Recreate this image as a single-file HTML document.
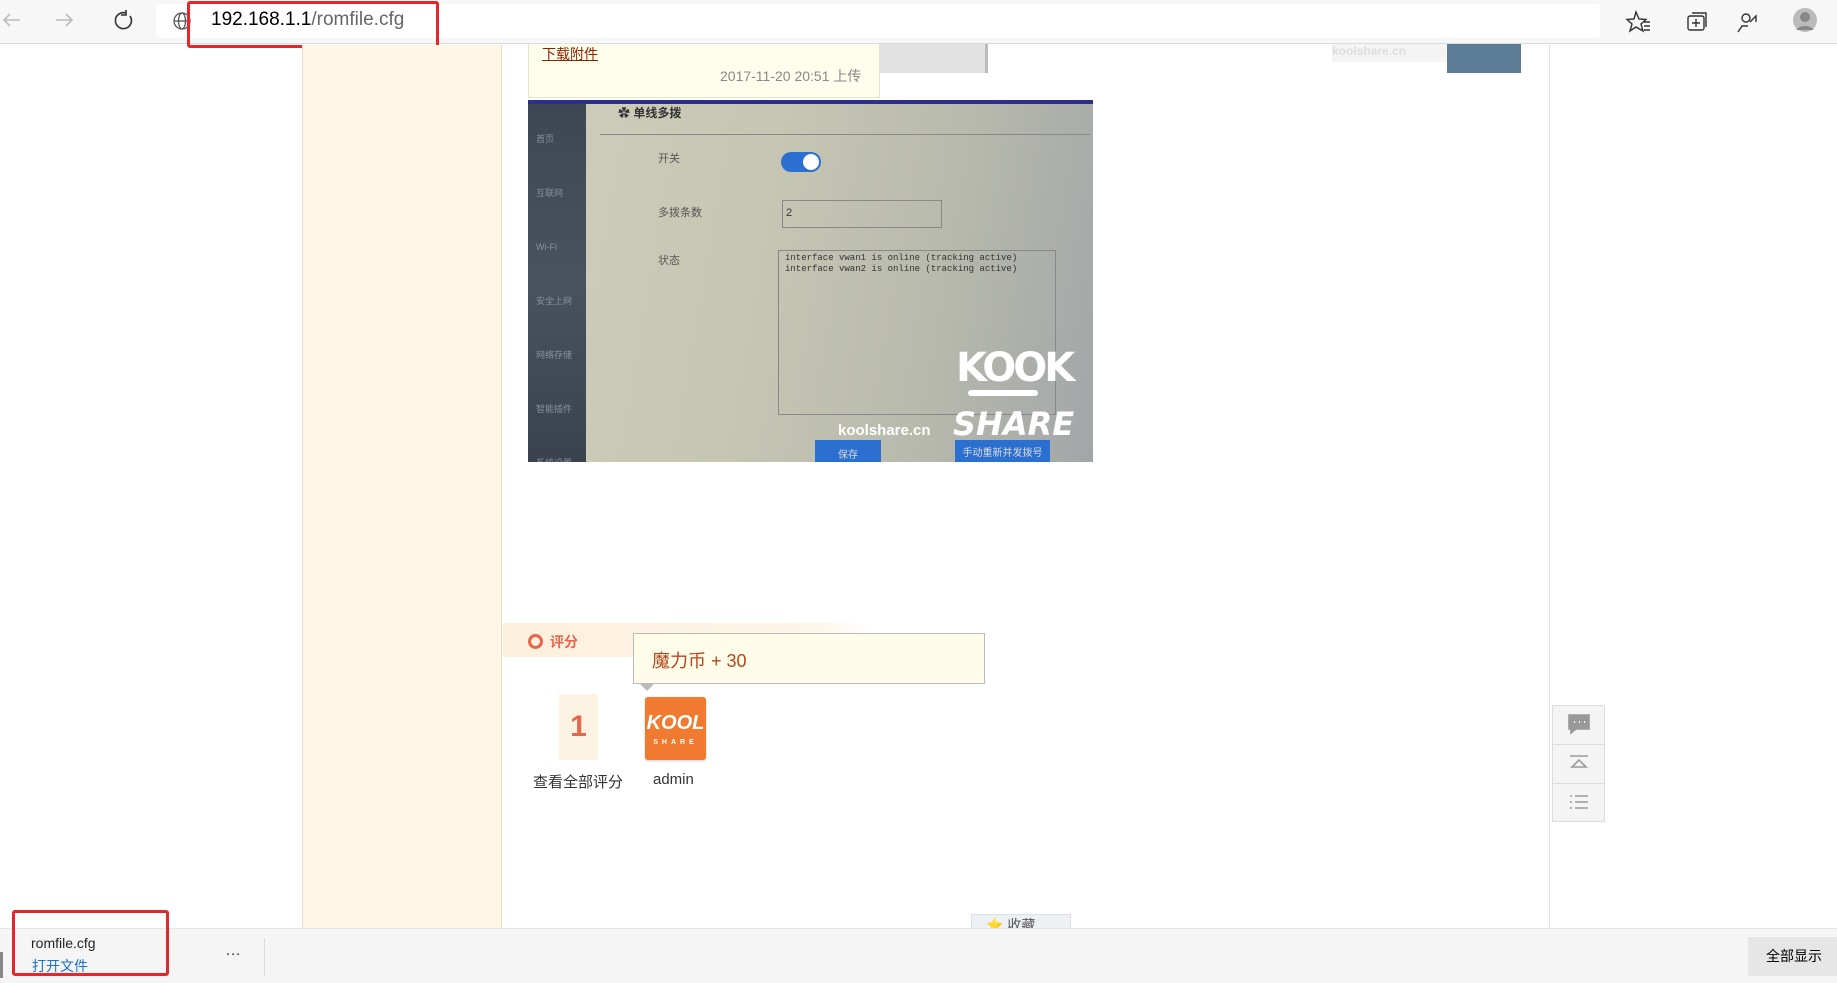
<!DOCTYPE html>
<html><head><meta charset="utf-8"><style>
*{margin:0;padding:0;box-sizing:border-box}
body{width:1837px;height:983px;position:relative;overflow:hidden;background:#fff;font-family:"Liberation Sans","Noto Sans CJK SC",sans-serif}
.a{position:absolute}
</style></head><body>
<!-- toolbar -->
<div class="a" style="left:0;top:0;width:1837px;height:44px;background:#f7f7f7;border-bottom:1px solid #ddd"></div>
<div class="a" style="left:156px;top:4px;width:1444px;height:34px;background:#fff;border-radius:4px"></div>
<svg class="a" style="left:0;top:8px" width="140" height="28" viewBox="0 0 140 28" fill="none" stroke="#bbb" stroke-width="1.6">
<path d="M20 12H4M10 6L4 12l6 6"/><path d="M56 12h16M66 6l6 6-6 6"/>
<path stroke="#333" d="M126 5a8 8 0 1 0 4 3M126 2v5h-5" /></svg>
<svg class="a" style="left:172px;top:11px" width="20" height="20" viewBox="0 0 20 20" fill="none" stroke="#555" stroke-width="1.3"><circle cx="10" cy="10" r="8"/><ellipse cx="10" cy="10" rx="3.5" ry="8"/><path d="M2 10h16"/></svg>
<div class="a" style="left:211px;top:9px;font-size:19px;color:#000">192.168.1.1<span style="color:#666">/romfile.cfg</span></div>
<div class="a" style="left:187px;top:1px;width:252px;height:47px;border:3px solid #e8262a;border-radius:3px"></div>
<svg class="a" style="left:1622px;top:8px" width="215" height="30" viewBox="0 0 215 30" fill="none" stroke="#333" stroke-width="1.4">
<path d="M14 4l3 7 7 .5-5 4.5 2 7-7-4-6 4 2-7-5-4.5 7-.5z"/><path d="M22 14h6M22 18h6M22 22h6"/>
<rect x="66" y="8" width="16" height="14" rx="2"/><path d="M70 5h14v14M74 11v8M70 15h8"/>
<circle cx="124" cy="10" r="4"/><path d="M116 24l4-6h6M128 14l6-6v6"/>
<circle cx="183" cy="12" r="12" fill="#bbb" stroke="none"/><circle cx="183" cy="9" r="5" fill="#888" stroke="none"/><path d="M174 22a10 7 0 0 1 18 0" fill="#888" stroke="none"/></svg>
<!-- page -->
<div class="a" style="left:302px;top:45px;width:200px;height:883px;background:#fdf5e6;border-left:1px solid #e6dcc8;border-right:1px solid #e6dcc8"></div>
<div class="a" style="left:1549px;top:45px;width:1px;height:883px;background:#ddd"></div>
<div class="a" style="left:528px;top:44px;width:352px;height:54px;background:#fffdec;border:1px solid #e5e0c8;border-top:none"></div>
<div class="a" style="left:542px;top:44px;font-size:14px;color:#8b2500;text-decoration:underline">下载附件</div>
<div class="a" style="left:720px;top:66px;font-size:14px;color:#888">2017-11-20 20:51 上传</div>
<div class="a" style="left:880px;top:44px;width:108px;height:29px;background:#e2e2e2;border-right:3px solid #bbb"></div>
<div class="a" style="left:1332px;top:44px;width:115px;height:18px;font-size:12px;color:#ddd;font-weight:bold;background:#f4f4f4">koolshare.cn</div>
<div class="a" style="left:1447px;top:44px;width:74px;height:29px;background:#5c7d95"></div>
<!-- photo -->
<div class="a" style="left:528px;top:100px;width:565px;height:362px;background:linear-gradient(100deg,#cfcdbb 0%,#c6c6b3 40%,#b8baad 70%,#a2a6a8 100%);overflow:hidden">
<div class="a" style="left:0;top:0;width:58px;height:362px;background:linear-gradient(180deg,#3e4654,#4a5260 50%,#3a4250)"></div>
<div class="a" style="left:8px;top:12px;font-size:9px;color:#8a909a;line-height:54px">首页<br>互联网<br>Wi-Fi<br>安全上网<br>网络存储<br>智能插件<br>系统设置</div>
<div class="a" style="left:0;top:0;width:565px;height:4px;background:#2c2f8a"></div>
<div class="a" style="left:90px;top:4px;font-size:12px;color:#333;font-weight:bold">✿ 单线多拨</div>
<div class="a" style="left:72px;top:34px;width:490px;height:1px;background:#888"></div>
<div class="a" style="left:130px;top:50px;font-size:11px;color:#555">开关</div>
<div class="a" style="left:253px;top:52px;width:40px;height:20px;border-radius:10px;background:#2b6fd0"></div>
<div class="a" style="left:275px;top:54px;width:16px;height:16px;border-radius:8px;background:#fff"></div>
<div class="a" style="left:130px;top:104px;font-size:11px;color:#555">多拨条数</div>
<div class="a" style="left:254px;top:100px;width:160px;height:28px;border:1px solid #888;font-size:11px;padding:6px 3px;color:#333">2</div>
<div class="a" style="left:130px;top:152px;font-size:11px;color:#555">状态</div>
<div class="a" style="left:250px;top:150px;width:278px;height:165px;border:1px solid #888;font-family:'Liberation Mono',monospace;font-size:9px;color:#333;padding:2px 6px;line-height:11px">interface vwan1 is online (tracking active)<br>interface vwan2 is online (tracking active)</div>
<div class="a" style="left:428px;top:245px;font-size:40px;font-weight:bold;color:#fff;font-family:'DejaVu Sans';letter-spacing:-3px">KOOK</div>
<div class="a" style="left:440px;top:290px;width:70px;height:6px;background:#fff;border-radius:3px"></div>
<div class="a" style="left:425px;top:305px;font-size:32px;font-weight:bold;color:#fff;font-family:'DejaVu Sans';font-style:italic">SHARE</div>
<div class="a" style="left:310px;top:322px;font-size:15px;font-weight:bold;color:#fff">koolshare.cn</div>
<div class="a" style="left:287px;top:340px;width:66px;height:24px;background:#2b6fd0;color:#ddd;font-size:10px;text-align:center;padding-top:6px">保存</div>
<div class="a" style="left:427px;top:340px;width:95px;height:24px;background:#2b6fd0;color:#ddd;font-size:10px;text-align:center;padding-top:4px">手动重新并发拨号</div>
</div>
<!-- rating -->
<div class="a" style="left:503px;top:623px;width:366px;height:34px;background:linear-gradient(90deg,#fdf0dc,#fdf5e8 85%,#fff)"></div>
<div class="a" style="left:528px;top:634px;width:15px;height:15px;border:3px solid #e8644a;border-radius:50%"></div>
<div class="a" style="left:550px;top:632px;font-size:14px;font-weight:bold;color:#e8644a">评分</div>
<div class="a" style="left:633px;top:633px;width:352px;height:51px;background:#fffdea;border:1px solid #bbb"></div>
<div class="a" style="left:652px;top:647px;font-size:18px;color:#b5451b">魔力币 + 30</div>
<div class="a" style="left:640px;top:684px;width:0;height:0;border-left:7px solid transparent;border-right:7px solid transparent;border-top:7px solid #bbb"></div>
<div class="a" style="left:559px;top:694px;width:39px;height:66px;background:#fdf3e2;text-align:center;font-size:30px;font-weight:bold;color:#e8644a;line-height:66px">1</div>
<div class="a" style="left:645px;top:697px;width:61px;height:63px;background:#f07a30;border-radius:3px;box-shadow:0 1px 2px #ccc;color:#fff;text-align:center;font-weight:bold;font-size:20px;padding-top:16px;line-height:20px;font-style:italic">KOOL<div style="font-size:7px;letter-spacing:4px;font-style:normal">SHARE</div></div>
<div class="a" style="left:533px;top:771px;font-size:15px;color:#333">查看全部评分</div>
<div class="a" style="left:653px;top:771px;font-size:15px;color:#333">admin</div>
<!-- side tools -->
<div class="a" style="left:1552px;top:705px;width:53px;height:117px;background:#f4f4f4;border:1px solid #ddd"></div>
<div class="a" style="left:1553px;top:744px;width:51px;height:1px;background:#ddd"></div>
<div class="a" style="left:1553px;top:783px;width:51px;height:1px;background:#ddd"></div>
<svg class="a" style="left:1566px;top:712px" width="26" height="104" viewBox="0 0 26 104" fill="none" stroke="#999" stroke-width="1.6">
<path d="M3 3h20v14H10l-5 4v-4H3z" fill="#999"/><path d="M8 10h1M13 10h1M18 10h1" stroke="#fff" stroke-width="2"/>
<path d="M4 44h18M13 48l-7 7h14z"/><path d="M4 84h2M9 84h13M4 90h2M9 90h13M4 96h2M9 96h13"/></svg>
<!-- collect btn -->
<div class="a" style="left:971px;top:914px;width:100px;height:20px;background:#eef1f4;border:1px solid #dde;font-size:14px;color:#555;padding-left:14px">⭐ 收藏</div>
<!-- download bar -->
<div class="a" style="left:0;top:928px;width:1837px;height:55px;background:#f5f5f5;border-top:1px solid #e6e6e6"></div>
<div class="a" style="left:0;top:952px;width:3px;height:26px;background:#888"></div>
<div class="a" style="left:31px;top:935px;font-size:14px;color:#222">romfile.cfg</div>
<div class="a" style="left:32px;top:956px;font-size:14px;color:#1a6fd0">打开文件</div>
<div class="a" style="left:12px;top:910px;width:157px;height:66px;border:3px solid #e8262a;border-radius:3px"></div>
<div class="a" style="left:225px;top:942px;font-size:16px;color:#333">…</div>
<div class="a" style="left:264px;top:938px;width:1px;height:38px;background:#ddd"></div>
<div class="a" style="left:1748px;top:937px;width:89px;height:39px;background:#e6e6e6;font-size:14px;color:#000;line-height:39px;padding-left:18px">全部显示</div>
</body></html>
